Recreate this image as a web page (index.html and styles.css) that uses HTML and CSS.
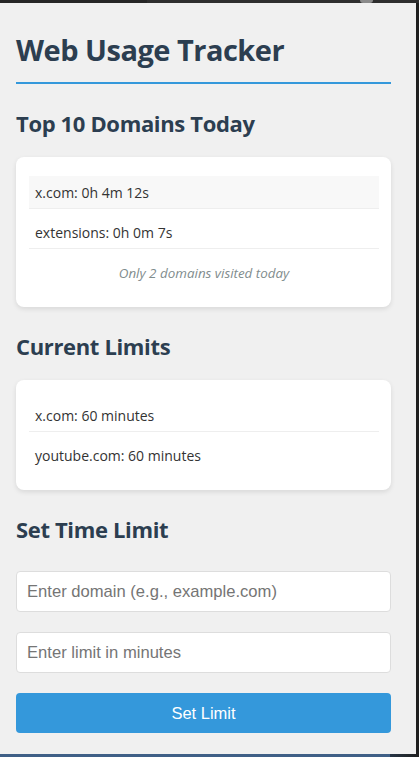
FILE: index.html
```html
<!DOCTYPE html>
<html lang="en">
<head>
<meta charset="utf-8">
<title>Web Usage Tracker</title>
<link rel="stylesheet" href="styles.css">
</head>
<body>
<div class="frame">
  <div class="topbar"><span class="tab"></span><span class="knob"></span></div>
  <div class="window">
    <main class="popup">
      <h1 class="title">Web Usage Tracker</h1>

      <h2 class="section-title">Top 10 Domains Today</h2>
      <div class="card">
        <ul class="list">
          <li class="item item-hover">x.com: 0h 4m 12s</li>
          <li class="item">extensions: 0h 0m 7s</li>
          <li class="note">Only 2 domains visited today</li>
        </ul>
      </div>

      <h2 class="section-title">Current Limits</h2>
      <div class="card">
        <ul class="list">
          <li class="item">x.com: 60 minutes</li>
          <li class="item">youtube.com: 60 minutes</li>
        </ul>
      </div>

      <h2 class="section-title">Set Time Limit</h2>
      <form class="limit-form">
        <input class="field" type="text" placeholder="Enter domain (e.g., example.com)">
        <input class="field" type="number" placeholder="Enter limit in minutes">
        <button class="btn" type="button">Set Limit</button>
      </form>
    </main>
    <div class="edge"></div>
  </div>
  <div class="bottombar"></div>
</div>
</body>
</html>
```

FILE: styles.css
```css
* { box-sizing: border-box; }

html, body {
  margin: 0;
  padding: 0;
  background: #2b2b2b;
}

body {
  width: 419px;
  height: 757px;
  overflow: hidden;
  font-family: "Open Sans", "Noto Sans", sans-serif;
}

.frame {
  display: flex;
  flex-direction: column;
  height: 757px;
}

.topbar {
  height: 3px;
  background: #2e2e2e;
  position: relative;
  display: flex;
}

.tab {
  width: 147px;
  height: 3px;
  background: #262626;
}

.knob {
  position: absolute;
  left: 360px;
  top: 0;
  width: 13px;
  height: 3px;
  border-radius: 0 0 6px 6px;
  background: #8a8a8a;
}

.window {
  display: flex;
  flex: 1;
  min-height: 0;
}

.edge {
  width: 3px;
  background: #1f1f1f;
}

.bottombar {
  height: 3px;
  background: linear-gradient(90deg, #3f5f86 0, #3f5f86 390px, #263545 390px, #1f1f1f 100%);
}

.popup {
  flex: 1;
  background: #f0f0f0;
  padding: 26px 25px 0 16px;
  color: #333;
}

.title {
  margin: 0;
  font-size: 29px;
  line-height: 42px;
  font-weight: 700;
  color: #2c3e50;
  padding-bottom: 11px;
  border-bottom: 2px solid #3498db;
  letter-spacing: -0.5px;
}

.section-title {
  margin: 23px 0 18px;
  font-size: 22px;
  line-height: 32px;
  font-weight: 700;
  color: #2c3e50;
  letter-spacing: -0.35px;
}

.card {
  background: #fff;
  border-radius: 8px;
  box-shadow: 0 2px 5px rgba(0, 0, 0, 0.1);
  padding: 19px 12px 19px 13px;
}

.list {
  list-style: none;
  margin: 0;
  padding: 0;
}

.item {
  font-size: 14px;
  line-height: 16px;
  padding: 9px 6px 7px;
  border-bottom: 1px solid #eee;
  margin-bottom: 7px;
  color: #333;
}

.item:last-child {
  border-bottom: none;
  margin-bottom: 0;
}

.item-hover {
  background: #f8f8f8;
}

.note {
  font-size: 13.4px;
  line-height: 16px;
  padding: 9px 6px 7px;
  text-align: center;
  font-style: italic;
  color: #7f8c8d;
}

.limit-form {
  display: flex;
  flex-direction: column;
  gap: 20px;
  padding-top: 8px;
}

.field {
  height: 41px;
  width: 100%;
  border: 1px solid #ddd;
  border-radius: 4px;
  background: #fff;
  padding: 0 10px;
  font-family: "Liberation Sans", Arial, sans-serif;
  font-size: 16.6px;
  color: #333;
  outline: none;
}

.field::placeholder {
  color: #757575;
}

.field::-webkit-outer-spin-button,
.field::-webkit-inner-spin-button {
  -webkit-appearance: none;
  margin: 0;
}

.btn {
  height: 40px;
  width: 100%;
  border: none;
  border-radius: 4px;
  background: #3498db;
  color: #fff;
  font-family: "Liberation Sans", Arial, sans-serif;
  font-size: 16.5px;
  cursor: pointer;
}
```
